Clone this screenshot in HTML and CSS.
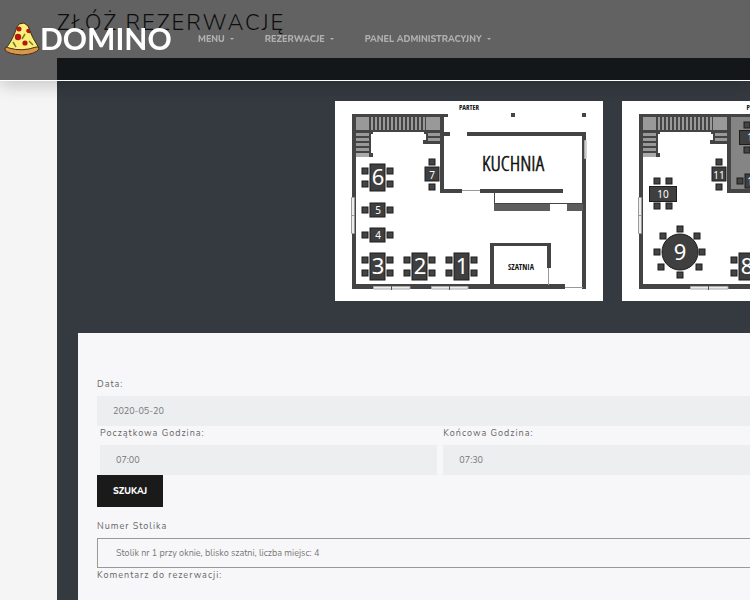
FILE: index.html
```html
<!DOCTYPE html>
<html lang="pl">
<head>
<meta charset="utf-8">
<meta name="viewport" content="width=device-width, initial-scale=1">
<title>Domino – Złóż rezerwację</title>
<link rel="stylesheet" href="styles.css">
</head>
<body>
<header class="navbar">
  <a class="brand" href="#">
    <svg class="brand-icon" viewBox="0 0 36 34" aria-hidden="true">
      <path d="M1 27 Q8 20 13 5 L15 2 L20 1 L24 4 Q28 16 35 26 Q18 33 1 27Z" fill="#fbef7c" stroke="#3a3212" stroke-width="1"/>
      <path d="M1 26 Q3 24 5 26 Q18 30 32 25 Q35 24 35 27 Q32 32 18 33 Q4 32 1 28Z" fill="#d9974a" stroke="#4a2e12" stroke-width="1"/>
      <circle cx="15" cy="7" r="2.5" fill="#b8150f"/>
      <circle cx="14" cy="15" r="3.2" fill="#b8150f"/>
      <circle cx="21" cy="21" r="2.6" fill="#b8150f"/>
      <path d="M23 7 L25 7 L27 11 Q23 12 22 9Z" fill="#b8150f"/>
      <path d="M9 20 L12 25 M21 12 L18 17 M25 19 L29 23" stroke="#7b7a22" stroke-width="1.5"/>
    </svg>
    <span class="brand-name">DOMINO</span>
  </a>
  <nav class="menu">
    <a class="menu-link" href="#">Menu</a>
    <a class="menu-link" href="#">Rezerwacje</a>
    <a class="menu-link" href="#">Panel administracyjny</a>
  </nav>
</header>

<main class="page">
  <h1 class="title">Złóż rezerwację</h1>
  <section class="booking">
    <div class="plans">
      <svg class="plan" viewBox="335 101 268 200" role="img" aria-label="Parter">
        <defs>
          <pattern id="treads-v" x="370" y="0" width="4" height="10" patternUnits="userSpaceOnUse">
            <rect width="4" height="10" fill="#444"/><rect x="1" width="2" height="10" fill="#999"/>
          </pattern>
          <pattern id="treads-h" x="0" y="132" width="10" height="5" patternUnits="userSpaceOnUse">
            <rect width="10" height="5" fill="#444"/><rect y="1" width="10" height="3" fill="#999"/>
          </pattern>
          <rect id="chair" width="6" height="6" fill="#444" stroke="#1d1d1d"/>
          <g id="tall">
            <rect x="8" y="0" width="15" height="27" fill="#3f3f3f" stroke="#1d1d1d"/>
            <use href="#chair" x="0" y="4"/><use href="#chair" x="0" y="17"/>
            <use href="#chair" x="25" y="4"/><use href="#chair" x="25" y="17"/>
          </g>
          <g id="small">
            <rect x="8" y="0" width="15" height="14" fill="#3f3f3f" stroke="#1d1d1d"/>
            <use href="#chair" x="0" y="4"/><use href="#chair" x="25" y="4"/>
          </g>
          <g id="upright">
            <rect x="0" y="8" width="14" height="14" fill="#3f3f3f" stroke="#1d1d1d"/>
            <use href="#chair" x="4" y="0"/><use href="#chair" x="4" y="25"/>
          </g>
          <g id="stairs">
            <rect x="356" y="117" width="84" height="14" fill="#999"/>
            <rect x="369" y="117" width="57" height="14" fill="url(#treads-v)"/>
            <rect x="356" y="131" width="14" height="22" fill="url(#treads-h)"/>
            <rect x="356" y="153" width="14" height="4" fill="#aaa"/>
            <rect x="426" y="131" width="14" height="12" fill="url(#treads-h)"/>
            <path d="M356 130H440V132H428V141H440V144H423V140H426V134H424V132H373V134H371V153H373V157H369V132H356Z" fill="#444"/>
            <path d="M352 114H448V117H444V132H450V136H444V189H462V193H440V117H356V284H565V289H352Z" fill="#444"/>
            <path d="M351.500 197.500H354.500V233.500H351.500ZM351 215.500H355" fill="#eee" stroke="#999"/>
          </g>
        </defs>
        <rect x="335" y="101" width="268" height="200" fill="#fff"/>
        <use href="#stairs"/>
        <path d="M467 132H586V289H582V136H467ZM480 189H563V193H480ZM490 243H551V268H547V246H494V285H490ZM511 113h4v4h-4zM582 113h4v4h-4z" fill="#444"/>
        <path d="M494 204H550V211H494ZM567 204H583V211H567Z" fill="#5d5d5d"/>
        <path d="M494.500 193V204M494 203.500H583" stroke="#444" fill="none"/>
        <path d="M462 190.500H480M548.500 268V285M565 287.500H583" stroke="#999" fill="none"/>
        <path d="M584.500 140.500H586V158.500H584.500ZM373.500 286.500H410V289H373.500ZM431.500 286.500H468V289H431.500Z" fill="#eee" stroke="#aaa"/>
        <path d="M391.500 286V290M449.500 286V290" stroke="#555"/>
        <use href="#tall" x="362" y="164"/>
        <use href="#small" x="362" y="203"/>
        <use href="#small" x="362" y="228"/>
        <use href="#tall" x="362" y="253"/>
        <use href="#tall" x="404" y="253"/>
        <use href="#tall" x="446" y="253"/>
        <use href="#upright" x="425" y="159"/>
        <g class="seat-large">
          <text x="378" y="185">6</text><text x="378" y="274">3</text>
          <text x="420" y="274">2</text><text x="462" y="274">1</text>
        </g>
        <g class="seat-small">
          <text x="378" y="214">5</text><text x="378" y="239">4</text><text x="432" y="179">7</text>
        </g>
        <text class="floor" x="469" y="110">PARTER</text>
        <text class="room-large" x="513" y="171">KUCHNIA</text>
        <text class="room-small" x="521" y="270">SZATNIA</text>
      </svg>
      <svg class="plan" viewBox="622 101 268 200" role="img" aria-label="Piętro">
        <rect x="622" y="101" width="268" height="200" fill="#fff"/>
        <rect x="731" y="115" width="142" height="75" fill="#858585"/>
        <use href="#stairs" x="287"/>
        <path d="M731 114H873V289H852V285H869V193H727V189H869V117H731Z" fill="#444"/>
        <path d="M731 132H738V136H731Z" fill="#858585"/>
        <path d="M690.500 286.500H728V289H690.500Z" fill="#eee" stroke="#aaa"/>
        <path d="M708.500 286V290" stroke="#555"/>
        <rect x="649.500" y="186.500" width="27" height="15" fill="#3f3f3f" stroke="#1d1d1d"/>
        <use href="#chair" x="654" y="178"/><use href="#chair" x="666" y="178"/>
        <use href="#chair" x="654" y="203"/><use href="#chair" x="666" y="203"/>
        <use href="#upright" x="712" y="159"/>
        <circle cx="680" cy="252" r="18" fill="#3f3f3f" stroke="#1d1d1d"/>
        <use href="#chair" x="677" y="226"/><use href="#chair" x="660" y="233"/>
        <use href="#chair" x="694" y="233"/><use href="#chair" x="654" y="249"/>
        <use href="#chair" x="699" y="249"/><use href="#chair" x="658" y="264"/>
        <use href="#chair" x="696" y="264"/><use href="#chair" x="677" y="272"/>
        <use href="#tall" x="731" y="253"/>
        <rect x="739.500" y="130.500" width="27" height="14" fill="#3f3f3f" stroke="#1d1d1d"/>
        <use href="#chair" x="744" y="122"/><use href="#chair" x="756" y="122"/>
        <use href="#chair" x="744" y="147"/><use href="#chair" x="756" y="147"/>
        <use href="#small" x="737" y="174"/>
        <g class="seat-large"><text x="680" y="260">9</text><text x="747" y="274">8</text></g>
        <g class="seat-small">
          <text x="663" y="198">10</text><text x="719" y="179">11</text>
          <text x="753" y="141">12</text><text x="753" y="185">13</text>
        </g>
        <text class="floor" x="756" y="110">PIĘTRO</text>
      </svg>
    </div>

    <form class="card">
      <label class="label" for="date">Data:</label>
      <input class="field" id="date" type="text" value="2020-05-20">
      <div class="times">
        <div class="time">
          <label class="label" for="from">Początkowa Godzina:</label>
          <input class="field" id="from" type="text" value="07:00">
        </div>
        <div class="time">
          <label class="label" for="to">Końcowa Godzina:</label>
          <input class="field" id="to" type="text" value="07:30">
        </div>
      </div>
      <button class="button" type="button">Szukaj</button>
      <label class="label" for="table">Numer Stolika</label>
      <select class="field select" id="table">
        <option>Stolik nr 1 przy oknie, blisko szatni, liczba miejsc: 4</option>
      </select>
      <label class="label" for="comment">Komentarz do rezerwacji:</label>
      <textarea class="field comment" id="comment"></textarea>
    </form>
  </section>
</main>
</body>
</html>
```
FILE: styles.css
```css
* {
  box-sizing: border-box;
}

body {
  margin: 0;
  overflow-x: hidden;
  background: #f5f5f5;
  color: #666;
  font-family: Nunito, "Open Sans", "Noto Sans", sans-serif;
  font-size: 9px;
}

.navbar {
  position: fixed;
  top: 0;
  left: 0;
  right: 0;
  z-index: 10;
  display: flex;
  align-items: center;
  height: 81px;
  padding: 0 4px 3px;
  border-bottom: 1px solid #fff;
  background: rgba(0, 0, 0, 0.6);
  box-shadow: 0 4px 16px rgba(0, 0, 0, 0.2);
}

.brand {
  display: flex;
  align-items: center;
  width: 194px;
  color: #fff;
  text-decoration: none;
}

.brand-icon {
  width: 36px;
  height: 34px;
}

.brand-name {
  padding-bottom: 2px;
  font-family: Lato, sans-serif;
  font-size: 30px;
  font-weight: 700;
  line-height: 32px;
}

.menu {
  display: flex;
  gap: 31px;
}

.menu-link {
  display: flex;
  align-items: center;
  gap: 5px;
  color: #b0b0b0;
  font-size: 9px;
  font-weight: 800;
  line-height: 12px;
  text-decoration: none;
  text-transform: uppercase;
  white-space: nowrap;
}

.menu-link::after {
  content: "";
  border: 2px solid transparent;
  border-top-color: currentColor;
  border-bottom: 0;
}

.page {
  min-width: 1110px;
  margin: 0 57px;
}

.title {
  margin: 0;
  padding-bottom: 12px;
  color: #212529;
  font-family: Nunito, Lato, sans-serif;
  font-size: 22px;
  font-weight: 300;
  letter-spacing: 2px;
  line-height: 46px;
  text-transform: uppercase;
}

.booking {
  padding: 43px 21px 21px;
  background: #343a40;
}

.plans {
  display: flex;
  justify-content: center;
  gap: 19px;
  margin-bottom: 32px;
}

.plan {
  width: 268px;
  height: 200px;
}

.plan text {
  text-anchor: middle;
}

.seat-large,
.seat-small {
  fill: #fff;
  font-family: "Noto Sans", sans-serif;
}

.seat-large {
  font-size: 22px;
}

.seat-small {
  font-size: 10px;
}

.floor,
.room-large,
.room-small {
  fill: #111;
  font-family: "Open Sans Condensed", "Roboto Condensed", sans-serif;
}

.floor {
  font-size: 7px;
  font-weight: 700;
}

.room-large {
  font-family: "Open Sans Condensed Light", "Roboto Condensed", "Liberation Sans Narrow", sans-serif;
  font-size: 21px;
  font-weight: 400;
  stroke: #111;
  stroke-width: 0.6;
}

.room-small {
  font-size: 8px;
  font-weight: 700;
}

.card {
  padding: 44px 19px;
  background: #f7f7f9;
}

.label {
  display: block;
  margin-bottom: 5px;
  letter-spacing: 1px;
  line-height: 14px;
}

.field {
  display: block;
  width: 100%;
  height: 30px;
  margin: 0;
  padding: 0 16px;
  border: 0;
  border-radius: 0;
  background: #eceeef;
  color: #777;
  font: inherit;
}

.times {
  display: grid;
  grid-template-columns: repeat(3, 1fr);
}

.time {
  padding: 0 3px;
}

.button {
  display: block;
  height: 32px;
  margin-bottom: 12px;
  padding: 0 16px;
  border: 0;
  background: #1a1a1a;
  color: #fff;
  font: inherit;
  font-weight: 800;
  text-transform: uppercase;
}

.select {
  appearance: none;
  padding: 0 18px;
  border: 1px solid #999;
  background: #f7f7f9;
}

.comment {
  height: 90px;
  padding: 8px 16px;
  background: #f7f7f9;
}
```
